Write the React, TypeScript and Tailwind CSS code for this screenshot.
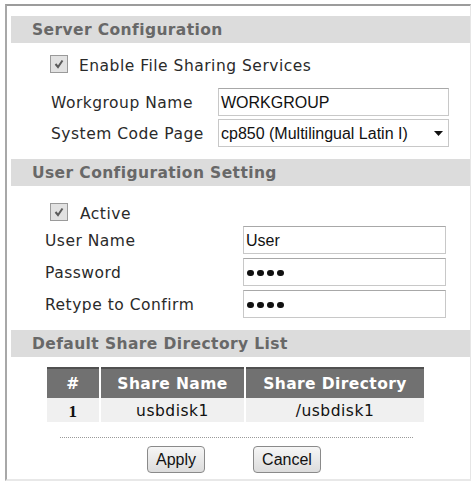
import React from 'react';

const SectionHeader: React.FC<{ title: string }> = ({ title }) => (
    <div className="h-[27px] bg-[#dcdcdc] flex items-center pl-[21px] pt-[3px] text-[15.5px] font-bold text-[#686868] tracking-[0.4px]">
        {title}
    </div>
);

const Check: React.FC = () => (
    <span className="w-[18px] h-[18px] border border-[#9a9a9a] bg-[#e2e2e2] flex items-center justify-center">
        <svg width="12" height="12" viewBox="0 0 12 12">
            <path d="M2.5 6 L5 9 L9.5 2.5" fill="none" stroke="#5c5c5c" strokeWidth="2" />
        </svg>
    </span>
);

const TextBox: React.FC<{ value: string; w: string }> = ({ value, w }) => (
    <div className={`${w} h-[28px] border border-[#c8c8c8] border-t-[#a8a8a8] bg-white flex items-center pl-[2px] pt-[1px] text-[16px] tracking-normal text-[#111] font-['Liberation_Sans',Arial,sans-serif]`}>
        {value}
    </div>
);

const Dots: React.FC = () => (
    <span className="flex gap-[3px] pl-[2px] pt-[1px]">
        {[0, 1, 2, 3].map(i => (
            <span key={i} className="w-[7px] h-[6px] rounded-full bg-[#111]" />
        ))}
    </span>
);

const App: React.FC = () => {
    return (
        <div className="w-[473px] h-[484px] bg-white pt-[4px] pl-[5px] pr-[2px] pb-[3px] font-['DejaVu_Sans',Verdana,sans-serif] text-[15.5px] tracking-[0.5px] text-[#2a2a2a]">
            <div className="h-full border-t-2 border-t-[#9c9c9c] border-l-2 border-l-[#a8a8a8] border-r border-r-[#e6e6e6] border-b-2 border-b-[#e8e8e8] pt-[10px] pl-[4px]">
                <SectionHeader title="Server Configuration" />
                <div className="pt-[12px] pl-[39px]">
                    <div className="flex items-center h-[18px] gap-[11px]">
                        <Check />
                        <span className="pt-[5px]">Enable File Sharing Services</span>
                    </div>
                    <div className="flex items-center mt-[15px] h-[28px]">
                        <span className="w-[168px] pl-[1px] pt-[4px]">Workgroup Name</span>
                        <TextBox value="WORKGROUP" w="w-[231px]" />
                    </div>
                    <div className="flex items-center mt-[3px] h-[28px]">
                        <span className="w-[168px] pl-[1px] pt-[4px]">System Code Page</span>
                        <div className="w-[231px] h-[28px] border border-[#c8c8c8] bg-white flex items-center justify-between pl-[2px] pr-[5px] pt-[1px] text-[16px] tracking-normal text-[#111] font-['Liberation_Sans',Arial,sans-serif]">
                            <span>cp850 (Multilingual Latin I)</span>
                            <svg width="9" height="5" viewBox="0 0 9 5">
                                <path d="M0 0 H9 L4.5 5 Z" fill="#111" />
                            </svg>
                        </div>
                    </div>
                </div>

                <div className="mt-[12px]">
                    <SectionHeader title="User Configuration Setting" />
                </div>
                <div className="pt-[17px] pl-[34px]">
                    <div className="flex items-center h-[18px] gap-[12px] pl-[5px]">
                        <Check />
                        <span className="pt-[5px]">Active</span>
                    </div>
                    <div className="flex items-center mt-[5px] h-[28px]">
                        <span className="w-[198px] pt-[4px]">User Name</span>
                        <TextBox value="User" w="w-[203px]" />
                    </div>
                    <div className="flex items-center mt-[4px] h-[28px]">
                        <span className="w-[198px] pt-[4px]">Password</span>
                        <div className="w-[203px] h-[28px] border border-[#c8c8c8] border-t-[#a8a8a8] bg-white flex items-center pl-[1px]">
                            <Dots />
                        </div>
                    </div>
                    <div className="flex items-center mt-[4px] h-[28px]">
                        <span className="w-[198px] pt-[4px]">Retype to Confirm</span>
                        <div className="w-[203px] h-[28px] border border-[#c8c8c8] border-t-[#a8a8a8] bg-white flex items-center pl-[1px]">
                            <Dots />
                        </div>
                    </div>
                </div>

                <div className="mt-[12px]">
                    <SectionHeader title="Default Share Directory List" />
                </div>
                <div className="pt-[10px] pl-[36px]">
                    <div className="grid grid-cols-[52px_143px_178px] gap-x-[2px] w-[377px]">
                        <div className="h-[31px] bg-[#717171] border-t-2 border-t-[#505050] flex items-center justify-center pt-[2px] text-white font-bold tracking-[0.4px]">#</div>
                        <div className="h-[31px] bg-[#717171] border-t-2 border-t-[#505050] flex items-center justify-center pt-[2px] text-white font-bold tracking-[0.4px]">Share Name</div>
                        <div className="h-[31px] bg-[#717171] border-t-2 border-t-[#505050] flex items-center justify-center pt-[2px] text-white font-bold tracking-[0.4px]">Share Directory</div>
                        <div className="h-[24px] bg-[#f0f0f0] flex items-center justify-center pt-[4px] font-bold text-[17px] text-[#111] font-['Liberation_Serif','Times_New_Roman',serif]">1</div>
                        <div className="h-[24px] bg-[#f0f0f0] flex items-center justify-center pt-[4px] text-[#111]">usbdisk1</div>
                        <div className="h-[24px] bg-[#f0f0f0] flex items-center justify-center pt-[4px] text-[#111]">/usbdisk1</div>
                    </div>
                    <div className="ml-[13px] mt-[15px] w-[353px] border-t border-dotted border-t-[#9a9a9a]" />
                    <div className="flex mt-[8px] pl-[100px] gap-[48px]">
                        <button className="w-[58px] h-[27px] rounded-[4px] border border-[#8a8a8a] bg-gradient-to-b from-[#f6f6f6] to-[#dcdcdc] text-[16px] tracking-normal text-[#111] font-['Liberation_Sans',Arial,sans-serif]">Apply</button>
                        <button className="w-[68px] h-[27px] rounded-[4px] border border-[#8a8a8a] bg-gradient-to-b from-[#f6f6f6] to-[#dcdcdc] text-[16px] tracking-normal text-[#111] font-['Liberation_Sans',Arial,sans-serif]">Cancel</button>
                    </div>
                </div>
            </div>
        </div>
    );
};

export default App;
